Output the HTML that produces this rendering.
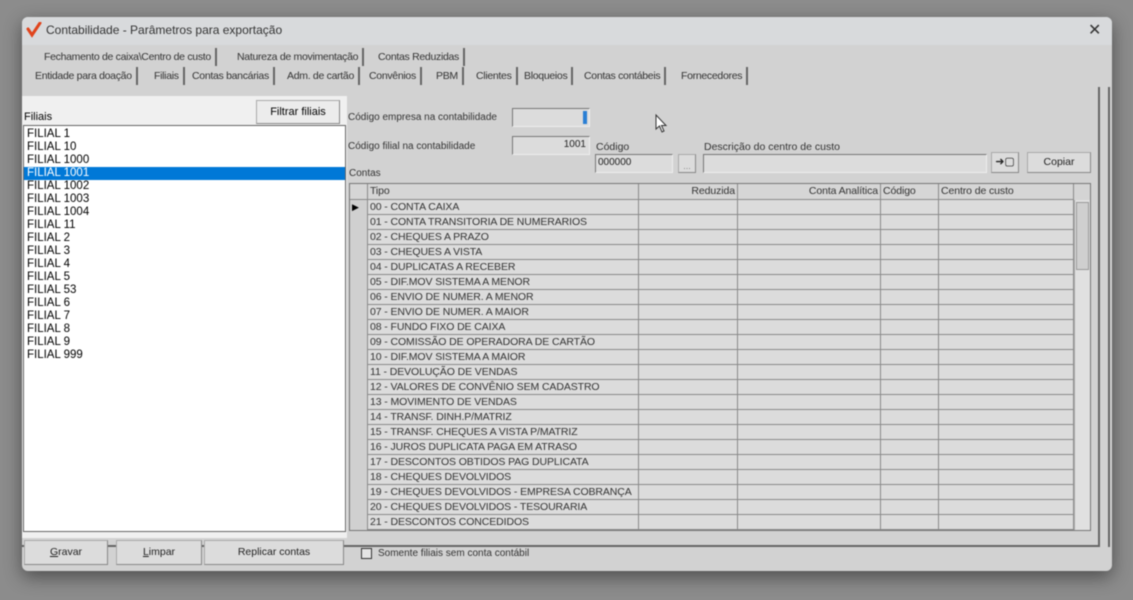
<!DOCTYPE html>
<html><head><meta charset="utf-8"><style>
*{box-sizing:border-box;margin:0;padding:0}
body{width:1133px;height:600px;background:#8c8c8c;font-family:"Liberation Sans",sans-serif;font-size:11px;color:#222;position:relative;overflow:hidden}
#wrap{position:absolute;left:0;top:0;width:1133px;height:600px;filter:blur(0.6px)}
.a{position:absolute}
#win{left:22px;top:17px;width:1090px;height:554px;background:#d2d2d2;border-radius:6px;box-shadow:0 6px 18px rgba(0,0,0,.45)}
#title{left:0;top:0;width:1090px;height:28px;background:#d8dadc;border-radius:6px 6px 0 0}
.tab{position:absolute;height:18px;line-height:18px;font-size:10.5px;color:#333;padding:0 4px;border-right:2px solid #666;white-space:nowrap;letter-spacing:-.3px}
.btn{position:absolute;background:#dcdcdc;border:1px solid #aaa;border-bottom-color:#888;border-right-color:#888;text-align:center;font-size:11px}
.inp{position:absolute;background:#dcdcdc;border:1px solid #777;border-right-color:#eee;border-bottom-color:#eee}
.li{height:13px;line-height:13px;padding-left:3px;font-size:11.5px;color:#000}
.grid{left:349px;top:183px;width:742px;height:348px;border:1px solid #777;background:#d4d4d4;overflow:hidden}
.row{position:absolute;left:0;height:15px;width:724px;border-bottom:1px solid #8a8a8a;background:#dcdcdc}
.c{position:absolute;top:0;height:15px;border-right:1px solid #8a8a8a;line-height:15px;font-size:10.5px;padding-left:2px;white-space:nowrap;overflow:hidden;color:#333;letter-spacing:-.1px}
</style></head><body><div id="wrap">
<div id="win" class="a">
 <div id="title" class="a">
  <svg class="a" style="left:4px;top:5px" width="16" height="16" viewBox="0 0 16 16"><path d="M2 7 L6 13 L14 1" stroke="#e0441c" stroke-width="3" fill="none" stroke-linecap="round"/></svg>
  <div class="a" style="left:24px;top:6px;font-size:12px;color:#333">Contabilidade - Parâmetros para exportação</div>
  <div class="a" style="left:1066px;top:3px;font-size:16px;color:#333">✕</div>
 </div>
 <div class="a" style="left:0;top:0">
  <div class="tab" style="left:18px;top:31px">Fechamento de caixa\Centro de custo</div>
  <div class="tab" style="left:211px;top:31px">Natureza de movimentação</div>
  <div class="tab" style="left:352px;top:31px">Contas Reduzidas</div>
  <div class="tab" style="left:9px;top:50px">Entidade para doação</div>
  <div class="tab" style="left:128px;top:50px">Filiais</div>
  <div class="tab" style="left:166px;top:50px">Contas bancárias</div>
  <div class="tab" style="left:261px;top:50px">Adm. de cartão</div>
  <div class="tab" style="left:343px;top:50px">Convênios</div>
  <div class="tab" style="left:410px;top:50px">PBM</div>
  <div class="tab" style="left:450px;top:50px">Clientes</div>
  <div class="tab" style="left:498px;top:50px">Bloqueios</div>
  <div class="tab" style="left:558px;top:50px">Contas contábeis</div>
  <div class="tab" style="left:655px;top:50px">Fornecedores</div>
 </div>
 <div class="a" style="left:0;top:70px;width:1078px;height:460px;border-right:2px solid #666;border-bottom:2px solid #666"></div>
 <div class="a" style="left:1086px;top:70px;width:2px;height:460px;background:#666"></div>
</div>
<div class="a" style="left:22px;top:96px;width:325px;height:442px;background:#f0f0f0"></div>
<div class="a" style="left:24px;top:111px;font-size:11px;color:#000">Filiais</div>
<div class="btn" style="left:256px;top:100px;width:84px;height:24px;line-height:22px;background:#ececec;color:#000">Filtrar filiais</div>
<div class="a" style="left:23px;top:125px;width:323px;height:407px;background:#fff;border:1px solid #666;padding-top:2px">
 <div class="li">FILIAL 1</div><div class="li">FILIAL 10</div><div class="li">FILIAL 1000</div>
 <div class="li" style="background:#0078d7;color:#fff">FILIAL 1001</div>
 <div class="li">FILIAL 1002</div><div class="li">FILIAL 1003</div><div class="li">FILIAL 1004</div>
 <div class="li">FILIAL 11</div><div class="li">FILIAL 2</div><div class="li">FILIAL 3</div>
 <div class="li">FILIAL 4</div><div class="li">FILIAL 5</div><div class="li">FILIAL 53</div>
 <div class="li">FILIAL 6</div><div class="li">FILIAL 7</div><div class="li">FILIAL 8</div>
 <div class="li">FILIAL 9</div><div class="li">FILIAL 999</div>
</div>
<div class="a" style="left:348px;top:112px;font-size:10px;color:#333">Código empresa na contabilidade</div>
<div class="inp" style="left:512px;top:108px;width:78px;height:19px"><div class="a" style="right:2px;top:2px;width:4px;height:13px;background:#2a7fd4"></div></div>
<div class="a" style="left:348px;top:141px;font-size:10px;color:#333">Código filial na contabilidade</div>
<div class="inp" style="left:512px;top:136px;width:78px;height:19px;text-align:right;padding-right:3px;font-size:10px;line-height:16px">1001</div>
<div class="a" style="left:596px;top:141px;font-size:10.5px;color:#333">Código</div>
<div class="inp" style="left:595px;top:154px;width:78px;height:19px;font-size:10px;line-height:16px;padding-left:2px">000000</div>
<div class="btn" style="left:678px;top:154px;width:18px;height:19px;font-size:9px;line-height:22px;color:#888">...</div>
<div class="a" style="left:704px;top:141px;font-size:10.5px;color:#333">Descrição do centro de custo</div>
<div class="inp" style="left:703px;top:154px;width:284px;height:19px"></div>
<div class="btn" style="left:991px;top:152px;width:28px;height:21px;line-height:18px;font-size:11px">➜▢</div>
<div class="btn" style="left:1027px;top:152px;width:64px;height:21px;line-height:19px;font-size:10.5px">Copiar</div>
<div class="a" style="left:349px;top:168px;font-size:10px;color:#333">Contas</div>
<div class="a grid">
 <div class="row" style="top:0;height:16px;background:#d6d6d6">
  <div class="c" style="left:0;width:18px"></div>
  <div class="c" style="left:18px;width:271px">Tipo</div>
  <div class="c" style="left:289px;width:99px;text-align:right;padding-right:2px">Reduzida</div>
  <div class="c" style="left:388px;width:143px;text-align:right;padding-right:2px">Conta Analítica</div>
  <div class="c" style="left:531px;width:58px">Código</div>
  <div class="c" style="left:589px;width:135px">Centro de custo</div>
 </div>
 <div id="rows"></div>
 <div class="a" style="left:724px;top:16px;width:16px;height:332px;background:#e0e0e0;border-left:1px solid #aaa"><div class="a" style="left:1px;top:2px;width:13px;height:68px;background:#cfcfcf;border:1px solid #999"></div></div>
</div>
<div class="btn" style="left:24px;top:540px;width:84px;height:25px;line-height:23px;font-size:10.5px"><u>G</u>ravar</div>
<div class="btn" style="left:116px;top:540px;width:86px;height:25px;line-height:23px;font-size:10.5px"><u>L</u>impar</div>
<div class="btn" style="left:204px;top:540px;width:140px;height:25px;line-height:23px;font-size:10.5px">Replicar contas</div>
<div class="a" style="left:361px;top:548px;width:11px;height:11px;border:1px solid #333;background:#e4e4e4"></div>
<div class="a" style="left:378px;top:548px;font-size:10px;color:#333">Somente filiais sem conta contábil</div>
<svg class="a" style="left:655px;top:114px" width="14" height="20" viewBox="0 0 14 20"><path d="M1 1 L1 15 L4.5 12 L7 18 L9 17 L6.5 11.5 L11 11.5 Z" fill="#fff" stroke="#333" stroke-width="1"/></svg>
</div>
<script>
var t=["00 - CONTA CAIXA","01 - CONTA TRANSITORIA DE NUMERARIOS","02 - CHEQUES A PRAZO","03 - CHEQUES A VISTA","04 - DUPLICATAS A RECEBER","05 - DIF.MOV SISTEMA A MENOR","06 - ENVIO DE NUMER. A MENOR","07 - ENVIO DE NUMER. A MAIOR","08 - FUNDO FIXO DE CAIXA","09 - COMISSÃO DE OPERADORA DE CARTÃO","10 - DIF.MOV SISTEMA A MAIOR","11 - DEVOLUÇÃO DE VENDAS","12 - VALORES DE CONVÊNIO SEM CADASTRO","13 - MOVIMENTO DE VENDAS","14 - TRANSF. DINH.P/MATRIZ","15 - TRANSF. CHEQUES A VISTA P/MATRIZ","16 - JUROS DUPLICATA PAGA EM ATRASO","17 - DESCONTOS OBTIDOS PAG DUPLICATA","18 - CHEQUES DEVOLVIDOS","19 - CHEQUES DEVOLVIDOS - EMPRESA COBRANÇA","20 - CHEQUES DEVOLVIDOS - TESOURARIA","21 - DESCONTOS CONCEDIDOS"];
var h="";for(var i=0;i<t.length;i++){var y=16+i*15;h+='<div class="row" style="top:'+y+'px"><div class="c" style="left:0;width:18px;background:#d0d0d0">'+(i==0?'<span style="font-size:9px;color:#000">&#9654;</span>':'')+'</div><div class="c" style="left:18px;width:271px">'+t[i]+'</div><div class="c" style="left:289px;width:99px"></div><div class="c" style="left:388px;width:143px"></div><div class="c" style="left:531px;width:58px"></div><div class="c" style="left:589px;width:135px"></div></div>';}
document.getElementById("rows").innerHTML=h;
</script>
</body></html>
